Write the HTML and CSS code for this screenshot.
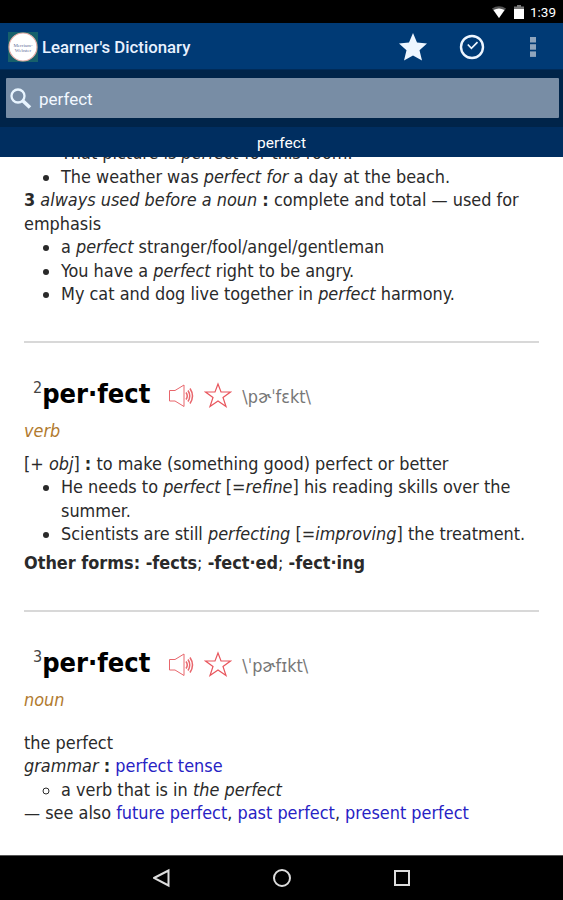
FILE: index.html
```html
<!DOCTYPE html>
<html lang="en">
<head>
    <meta charset="UTF-8">
    <title>Learner's Dictionary</title>
    <meta name="viewport" content="width=device-width, initial-scale=1.0">
    <link rel="stylesheet" href="styles.css">
</head>
<body>
    <!-- Status bar -->
    <div class="status-bar">
        <svg class="wifi" width="14" height="12" viewBox="0 0 14 12">
            <path d="M0 2.5Q7-2 14 2.5L7 12Z" fill="#555"/>
            <path d="M1.500 4Q7 1 12.500 4L7 12Z" fill="#fff"/>
        </svg>
        <svg class="battery" width="10" height="14" viewBox="0 0 10 14">
            <path d="M0 1.500H3V0H7V1.500H10V5H0Z" fill="#777"/>
            <path d="M0 4H10V14H0Z" fill="#fff"/>
        </svg>
        <span class="clock">1:39</span>
    </div>

    <!-- App bar -->
    <header class="app-bar">
        <svg class="logo" width="30" height="30" viewBox="0 0 30 30">
            <rect width="30" height="30" fill="#17606b"/>
            <circle cx="15" cy="15" r="14" fill="#fff" stroke="#e3a9a4" stroke-width="1.200"/>
            <text x="15" y="14.500" class="logo-text">Merriam-</text>
            <text x="15" y="20" class="logo-text">Webster</text>
        </svg>
        <h1 class="app-title">Learner's Dictionary</h1>
        <svg class="action-star" width="28" height="28" viewBox="0 0 28 28">
            <path d="M14 0L18 9.600L28 10.500L20.500 17.300L23 27.500L14 22.400L5 27.500L7.500 17.300L0 10.500L10 9.600Z" fill="#eef6ff"/>
        </svg>
        <svg class="action-recent" width="26" height="26" viewBox="0 0 26 26" fill="none" stroke="#eef6ff">
            <circle cx="13" cy="13" r="11" stroke-width="2.400"/>
            <path d="M8.800 10.500L12.400 14.300L18.500 8.200" stroke-width="1.700"/>
        </svg>
        <svg class="action-more" width="6" height="20" viewBox="0 0 6 20" fill="#8fa5bd">
            <rect width="6" height="5.500"/>
            <rect y="7.200" width="6" height="5.500"/>
            <rect y="14.400" width="6" height="5.500"/>
        </svg>
    </header>

    <!-- Search -->
    <div class="search-area">
        <div class="search-box">
            <svg class="search-icon" width="22" height="22" viewBox="0 0 22 22" fill="none" stroke="#e8f5ff">
                <circle cx="8" cy="8" r="6.500" stroke-width="2.300"/>
                <path d="M12.500 12.500L20 19.500" stroke-width="3.600"/>
            </svg>
            <span>perfect</span>
        </div>
    </div>
    <div class="word-bar">perfect</div>

    <!-- Entries -->
    <main class="content">
        <section class="entry first">
            <ul>
                <li>That picture is <i>perfect</i> for this room.</li>
                <li>The weather was <i>perfect for</i> a day at the beach.</li>
            </ul>
            <p><b>3</b> <i>always used before a noun</i> <b>:</b> complete and total — used for emphasis</p>
            <ul>
                <li>a <i>perfect</i> stranger/fool/angel/gentleman</li>
                <li>You have a <i>perfect</i> right to be angry.</li>
                <li>My cat and dog live together in <i>perfect</i> harmony.</li>
            </ul>
        </section>

        <section class="entry verb">
            <div class="headword">
                <sup>2</sup><h2>per·fect</h2>
                <svg class="speaker" width="26" height="24" viewBox="0 0 26 24" fill="none" stroke="#e8666c">
                    <path d="M1.500 6.500H7L16 1V22.500L7 17H1.500Z"/>
                    <path d="M18 8.500Q20.500 12 18 15.500M20 6.500Q23.500 12 20 17.500M22 4.500Q27 12 22 19.500" stroke-width="1.500"/>
                </svg>
                <svg class="star" width="28" height="26" viewBox="0 0 28 26" fill="none" stroke="#e8555c" stroke-width="1.200">
                    <path d="M14 2L17 10H26.500L19 15.500L22 24.500L14 19L6 24.500L9 15.500L1.500 10H11Z"/>
                </svg>
                <span class="pron">\pɚˈfɛkt\</span>
            </div>
            <p class="pos">verb</p>
            <p>[+ <i>obj</i>] <b>:</b> to make (something good) perfect or better</p>
            <ul>
                <li>He needs to <i>perfect</i> [=<i>refine</i>] his reading skills over the summer.</li>
                <li>Scientists are still <i>perfecting</i> [=<i>improving</i>] the treatment.</li>
            </ul>
            <p class="forms"><b>Other forms: -fects</b>; <b>-fect·ed</b>; <b>-fect·ing</b></p>
        </section>

        <section class="entry noun">
            <div class="headword">
                <sup>3</sup><h2>per·fect</h2>
                <svg class="speaker" width="26" height="24" viewBox="0 0 26 24" fill="none" stroke="#e8666c">
                    <path d="M1.500 6.500H7L16 1V22.500L7 17H1.500Z"/>
                    <path d="M18 8.500Q20.500 12 18 15.500M20 6.500Q23.500 12 20 17.500M22 4.500Q27 12 22 19.500" stroke-width="1.500"/>
                </svg>
                <svg class="star" width="28" height="26" viewBox="0 0 28 26" fill="none" stroke="#e8555c" stroke-width="1.200">
                    <path d="M14 2L17 10H26.500L19 15.500L22 24.500L14 19L6 24.500L9 15.500L1.500 10H11Z"/>
                </svg>
                <span class="pron">\ˈpɚfɪkt\</span>
            </div>
            <p class="pos">noun</p>
            <p>the perfect</p>
            <p><i>grammar</i> <b>:</b> <a>perfect tense</a></p>
            <ul class="sub">
                <li>a verb that is in <i>the perfect</i></li>
            </ul>
            <p>— see also <a>future perfect</a>, <a>past perfect</a>, <a>present perfect</a></p>
        </section>
    </main>

    <!-- Navigation bar -->
    <nav class="nav-bar">
        <svg width="18" height="20" viewBox="0 0 18 20"><path d="M1 10L15.500 2.500V17.500Z"/></svg>
        <svg width="20" height="20" viewBox="0 0 20 20"><circle cx="10" cy="10" r="8"/></svg>
        <svg width="18" height="20" viewBox="0 0 18 20"><rect x="2" y="3" width="14" height="14"/></svg>
    </nav>
</body>
</html>
```

FILE: styles.css
```css
:root {
    --bar-bg: #003a75;
    --search-bg: #002449;
    --word-bg: #002e60;
    --text-color: #2a2a2a;
    --link-color: #2722c4;
    --pos-color: #b17a2e;
}

* {
    box-sizing: border-box;
}

body {
    margin: 0;
    height: 900px;
    display: flex;
    flex-direction: column;
    overflow: hidden;
    font-family: Roboto, sans-serif;
    background: #fff;
    color: var(--text-color);
}

svg {
    display: block;
    flex: none;
}

.status-bar {
    height: 23px;
    flex: none;
    display: flex;
    justify-content: flex-end;
    align-items: center;
    padding: 1px 7px 0 0;
    background: #000;
    color: #fff;
}

.battery {
    margin: 0 6px 0 8px;
}

.clock {
    font-size: 13.500px;
}

.app-bar {
    height: 46px;
    flex: none;
    display: flex;
    align-items: center;
    padding: 1px 27px 0 8px;
    background: var(--bar-bg);
}

.logo-text {
    font: 5px "Liberation Serif", serif;
    text-anchor: middle;
    fill: #64709a;
}

.app-title {
    flex: 1;
    margin: 0 0 0 4px;
    font-size: 16.800px;
    font-weight: 500;
    color: #e8f1ff;
}

.action-recent {
    margin: 0 45px 0 32px;
}

.search-area {
    height: 58px;
    flex: none;
    padding: 8px 4px 9px 6px;
    background: var(--search-bg);
    border-top: 1px solid #002b59;
}

.search-box {
    height: 40px;
    display: flex;
    align-items: center;
    gap: 7px;
    padding: 1px 0 0 4px;
    background: #788da5;
    border-radius: 1px;
    font-size: 17px;
    color: #f2f8ff;
}

.word-bar {
    height: 30px;
    flex: none;
    line-height: 32px;
    text-align: center;
    background: var(--word-bg);
    font-size: 15.500px;
    color: #fff;
}

.content {
    flex: 1;
    min-height: 0;
    overflow: hidden;
    padding: 0 24px;
    font-family: "DejaVu Sans Condensed", "DejaVu Sans", sans-serif;
    font-size: 17.900px;
    line-height: 23.500px;
}

.content p {
    margin: 0;
}

.content ul {
    margin: 0;
    padding-left: 37px;
}

.content .sub {
    list-style: circle;
}

.entry {
    padding-top: 34px;
    border-bottom: 2px solid #d8d8d8;
}

/* scrolled partly under the word bar */
.entry.first {
    height: 202px;
    margin-top: -16px;
    padding-top: 0;
}

.entry.verb {
    height: 269px;
}

.entry.noun {
    border-bottom: none;
}

.headword {
    display: flex;
    align-items: center;
    height: 34px;
    padding-left: 9px;
}

.headword sup {
    align-self: flex-start;
    font-size: 16px;
    line-height: 22px;
    color: #444;
}

.headword h2 {
    margin: 0;
    font-size: 27px;
    line-height: 34px;
    color: #000;
}

.speaker {
    margin: 4px 10px 0 18px;
}

.star {
    margin-top: 2px;
}

.pron {
    margin: 6px 0 0 10px;
    color: #777;
}

.content .pos {
    margin: 8px 0 9px;
    font-style: italic;
    color: var(--pos-color);
}

.noun .pos {
    margin-bottom: 19px;
}

.content .forms {
    margin-top: 5px;
}

.content a {
    color: var(--link-color);
}

.nav-bar {
    height: 45px;
    flex: none;
    display: flex;
    justify-content: center;
    align-items: center;
    gap: 101px;
    background: #000;
    border-top: 1px solid #555;
}

.nav-bar path,
.nav-bar circle,
.nav-bar rect {
    fill: none;
    stroke: #ddd;
    stroke-width: 2;
}
```
